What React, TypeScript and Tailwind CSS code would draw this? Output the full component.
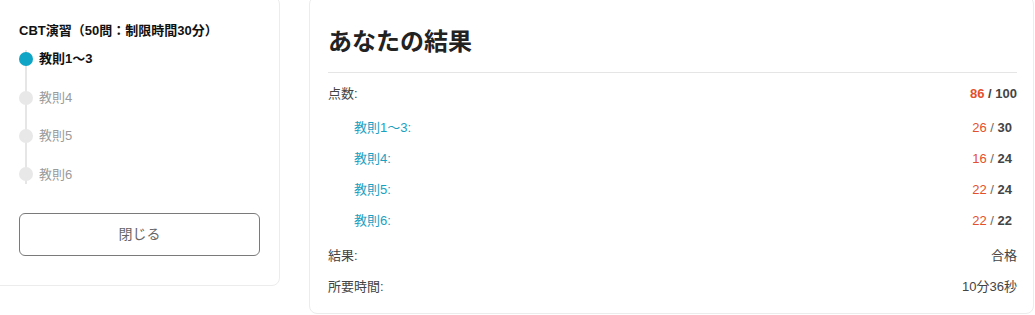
const font = { fontFamily: '"Liberation Sans", "Noto Sans CJK JP", sans-serif' };

const steps = [
    { label: "教則1〜3", active: true },
    { label: "教則4", active: false },
    { label: "教則5", active: false },
    { label: "教則6", active: false },
];

const sections = [
    { label: "教則1〜3:", got: 26, max: 30 },
    { label: "教則4:", got: 16, max: 24 },
    { label: "教則5:", got: 22, max: 24 },
    { label: "教則6:", got: 22, max: 22 },
];

export default function App() {
    return (
        <div className="w-[1035px] h-[315px] overflow-hidden bg-white" style={font}>
            <div className="flex items-start gap-[29px] -mt-[4px] -ml-[11px]">
                {/* sidebar: exam steps */}
                <div className="w-[291px] border border-[#ececec] rounded-[8px] pl-[29px] pr-[19px] pt-[26px] pb-[29px]">
                    <div className="text-[13px] font-bold text-[#111] leading-[16px]">
                        CBT演習（50問：制限時間30分）
                    </div>
                    <div className="relative mt-[1px]">
                        <div className="absolute left-[6px] top-[10px] bottom-[10px] w-[2px] bg-[#e6e6e6]" />
                        {steps.map((s) => (
                            <div key={s.label} className="relative flex items-center h-[38.4px]">
                                <span
                                    className={`w-[14px] h-[14px] rounded-full shrink-0 ${
                                        s.active ? "bg-[#0ea5c6]" : "bg-[#e8e8e8]"
                                    }`}
                                />
                                <span
                                    className={`ml-[6px] text-[13px] ${
                                        s.active ? "font-bold text-[#111]" : "text-[#9a9a9a]"
                                    }`}
                                >
                                    {s.label}
                                </span>
                            </div>
                        ))}
                    </div>
                    <button className="mt-[19px] w-full h-[43px] border border-[#7a7a7a] rounded-[6px] text-[14px] text-[#666]">
                        閉じる
                    </button>
                </div>

                {/* result panel */}
                <div className="w-[725px] h-[318px] border border-[#ececec] rounded-[8px] pl-[18px] pr-[16px] pt-[29px]">
                    <h1 className="text-[24px] font-bold text-[#222] leading-[32px]">あなたの結果</h1>
                    <div className="mt-[14px] h-px bg-[#e5e5e5]" />
                    <div className="mt-[5px] text-[13px] text-[#444]">
                        <div className="flex items-center justify-between h-[31px]">
                            <span>点数:</span>
                            <span className="font-bold">
                                <span className="text-[#e4502c]">86</span> / 100
                            </span>
                        </div>
                        <div className="mt-[3px] mb-[4px] pl-[26px] pr-[5px]">
                            {sections.map((s) => (
                                <div key={s.label} className="flex items-center justify-between h-[31px]">
                                    <span className="text-[#1aa0bf]">{s.label}</span>
                                    <span>
                                        <span className="text-[#e4502c]">{s.got}</span>
                                        <span className="text-[#666]"> / </span>
                                        <span className="font-bold">{s.max}</span>
                                    </span>
                                </div>
                            ))}
                        </div>
                        <div className="flex items-center justify-between h-[31px]">
                            <span>結果:</span>
                            <span>合格</span>
                        </div>
                        <div className="flex items-center justify-between h-[31px]">
                            <span>所要時間:</span>
                            <span>10分36秒</span>
                        </div>
                    </div>
                </div>
            </div>
        </div>
    );
}
